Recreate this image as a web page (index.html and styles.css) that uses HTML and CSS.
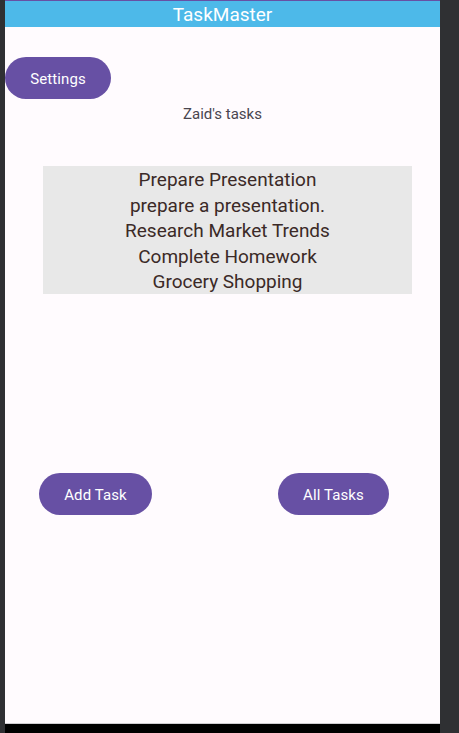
FILE: index.html
```html
<!DOCTYPE html>
<html>
<head>
<meta charset="utf-8">
<link rel="stylesheet" href="styles.css">
</head>
<body>
<div class="frame">
  <div class="edge-left"></div>
  <div class="phone">
    <div class="status-line"></div>
    <header class="appbar">TaskMaster</header>
    <main class="screen">
      <button class="pill settings">Settings</button>
      <p class="owner">Zaid's tasks</p>
      <ul class="tasks">
        <li>Prepare Presentation</li>
        <li>prepare a presentation.</li>
        <li>Research Market Trends</li>
        <li>Complete Homework</li>
        <li>Grocery Shopping</li>
      </ul>
      <div class="actions">
        <button class="pill add">Add Task</button>
        <button class="pill all">All Tasks</button>
      </div>
    </main>
    <div class="nav-line"></div>
    <div class="nav-bar"></div>
  </div>
  <div class="edge-right"></div>
</div>
</body>
</html>
```

FILE: styles.css
```css
html, body {
  margin: 0;
  padding: 0;
  height: 100%;
  background: #2f3033;
  font-family: Roboto, "Noto Sans", sans-serif;
}
.frame {
  display: flex;
  height: 733px;
}
.edge-left {
  width: 5px;
  flex: none;
}
.edge-right {
  flex: 1;
}
.phone {
  width: 435px;
  flex: none;
  display: flex;
  flex-direction: column;
  background: #fffbfe;
}
.status-line {
  height: 1px;
  background: #6750a4;
}
.appbar {
  height: 26px;
  background: #4db9e9;
  color: #ffffff;
  font-size: 19px;
  line-height: 27px;
  text-align: center;
}
.screen {
  flex: 1;
  display: flex;
  flex-direction: column;
}
.pill {
  height: 42px;
  border: none;
  border-radius: 21px;
  background: #6750a4;
  color: #ffffff;
  font-family: Roboto, "Noto Sans", sans-serif;
  font-size: 15px;
  font-weight: 400;
  letter-spacing: 0.1px;
  padding: 2px 0 0;
  cursor: pointer;
}
.settings {
  margin-top: 30px;
  width: 106px;
  align-self: flex-start;
}
.owner {
  margin: 5px 0 0;
  font-size: 15px;
  line-height: 20px;
  color: #49454f;
  text-align: center;
}
.tasks {
  list-style: none;
  margin: 42px 0 0 38px;
  padding: 1px 0 0;
  height: 127px;
  width: 369px;
  background: #e8e8e8;
  color: #3b2a27;
  font-size: 19px;
  line-height: 25.6px;
  text-align: center;
}
.actions {
  margin-top: 179px;
  display: flex;
  padding-left: 34px;
}
.add {
  width: 113px;
}
.all {
  width: 111px;
  margin-left: 126px;
}
.nav-line {
  height: 1px;
  background: #d0ced2;
}
.nav-bar {
  height: 9px;
  background: #000000;
}
```
